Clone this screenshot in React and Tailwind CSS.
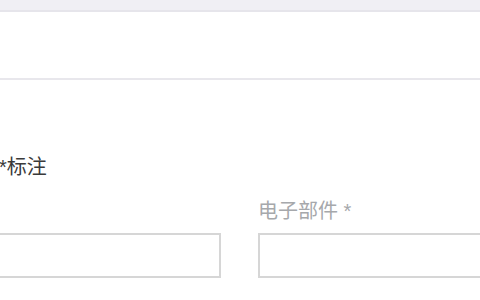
export default function App() {
  return (
    <div className="w-[480px] h-[300px] overflow-hidden bg-white" style={{ fontFamily: '"Liberation Sans", "Noto Sans CJK SC", sans-serif' }}>
      <div className="h-[12px] bg-[#f0eff4] border-b-2 border-[#e6e5eb]"></div>
      <div className="h-[68px] bg-white border-b-2 border-[#e8e7ec]"></div>
      <div className="pt-[74px]">
        <div className="text-[20px] leading-[26px] text-[#3a3a3a] -ml-[1px] whitespace-nowrap">*标注</div>
        <div className="mt-[20px] flex gap-[37px] -ml-[10px]">
          <div className="w-[231px] shrink-0 flex flex-col">
            <div className="h-[22px]"></div>
            <div className="mt-[11px] h-[45px] border-2 border-[#d6d6d6] bg-white"></div>
          </div>
          <div className="w-[260px] shrink-0 flex flex-col">
            <div className="h-[22px] text-[20px] leading-[22px] text-[#a6a8ab] whitespace-nowrap">电子部件 *</div>
            <div className="mt-[11px] h-[45px] border-2 border-[#d6d6d6] bg-white"></div>
          </div>
        </div>
      </div>
    </div>
  );
}
